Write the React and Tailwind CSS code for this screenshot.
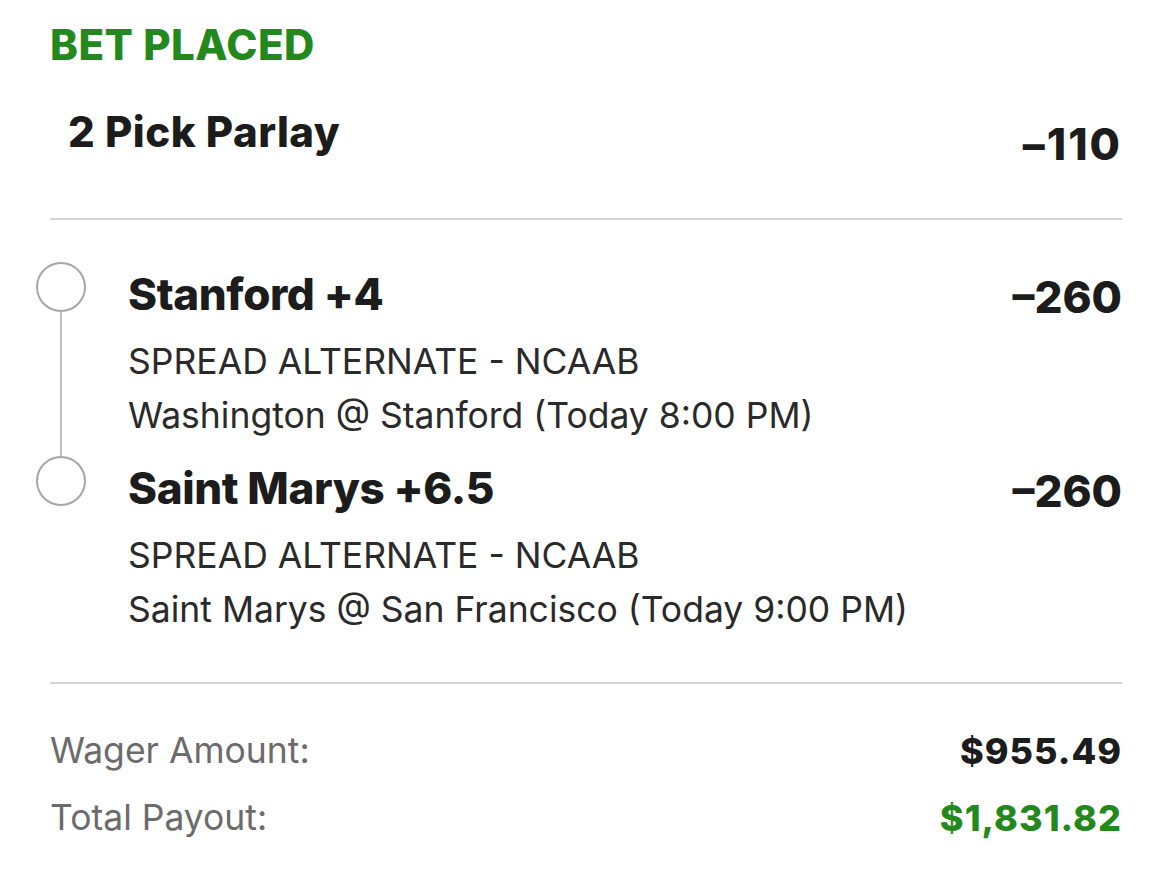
export default function App() {
  const legs = [
    {
      pick: 'Stanford +4',
      odds: '–260',
      market: 'SPREAD ALTERNATE - NCAAB',
      game: 'Washington @ Stanford (Today 8:00 PM)',
    },
    {
      pick: 'Saint Marys +6.5',
      odds: '–260',
      market: 'SPREAD ALTERNATE - NCAAB',
      game: 'Saint Marys @ San Francisco (Today 9:00 PM)',
    },
  ];

  return (
    <div
      className="w-[1170px] h-[883px] bg-white pl-[50px] pr-[48px] overflow-hidden"
      style={{ fontFamily: 'Inter, "Noto Sans", sans-serif' }}
    >
      <div className="pt-[24px] text-[42px] leading-[42px] font-extrabold tracking-[0.5px] text-[#23891c]">BET PLACED</div>

      <div className="mt-[45px] flex items-start justify-between">
        <div className="pl-[18px] text-[42px] leading-[41px] font-extrabold tracking-[0.5px] text-[#1c1c1c]">2 Pick Parlay</div>
        <div className="mt-[11px] text-[44px] leading-[44px] font-extrabold tracking-[2px] text-[#1c1c1c]">–110</div>
      </div>

      <div className="mt-[52px] h-[2px] bg-[#d4d4d4]" />

      <div className="mt-[42px] ml-[-14px] flex flex-col">
        {legs.map((leg, i) => (
          <div key={i} className="flex gap-[42px]">
            <div className="flex w-[50px] shrink-0 flex-col items-center">
              <div className="h-[50px] w-[50px] rounded-full border-2 border-[#a6a6a6]" />
              {i < legs.length - 1 && <div className="w-[2px] flex-1 bg-[#bfbfbf]" />}
            </div>
            <div className={`flex-1 ${i < legs.length - 1 ? 'pb-[13px]' : ''}`}>
              <div className="flex items-start justify-between">
                <div className="text-[44px] leading-[64px] font-extrabold tracking-[-0.4px] text-[#1c1c1c]">{leg.pick}</div>
                <div className="mt-[3px] text-[44px] leading-[64px] font-extrabold text-[#1c1c1c]">{leg.odds}</div>
              </div>
              <div className="mt-[6px] text-[35.5px] leading-[54px] text-[#2a2a2a]">
                <div>{leg.market}</div>
                <div>{leg.game}</div>
              </div>
            </div>
          </div>
        ))}
      </div>

      <div className="mt-[45px] h-[2px] bg-[#d4d4d4]" />

      <div className="mt-[49px] flex items-start justify-between text-[35.5px] leading-[36px]">
        <div className="text-[#6b6b6b]">Wager Amount:</div>
        <div className="text-[36px] font-extrabold tracking-[1px] text-[#1c1c1c]">$955.49</div>
      </div>
      <div className="mt-[31px] flex items-start justify-between text-[35.5px] leading-[36px]">
        <div className="text-[#6b6b6b]">Total Payout:</div>
        <div className="text-[36px] font-extrabold tracking-[1px] text-[#23891c]">$1,831.82</div>
      </div>
    </div>
  );
}
